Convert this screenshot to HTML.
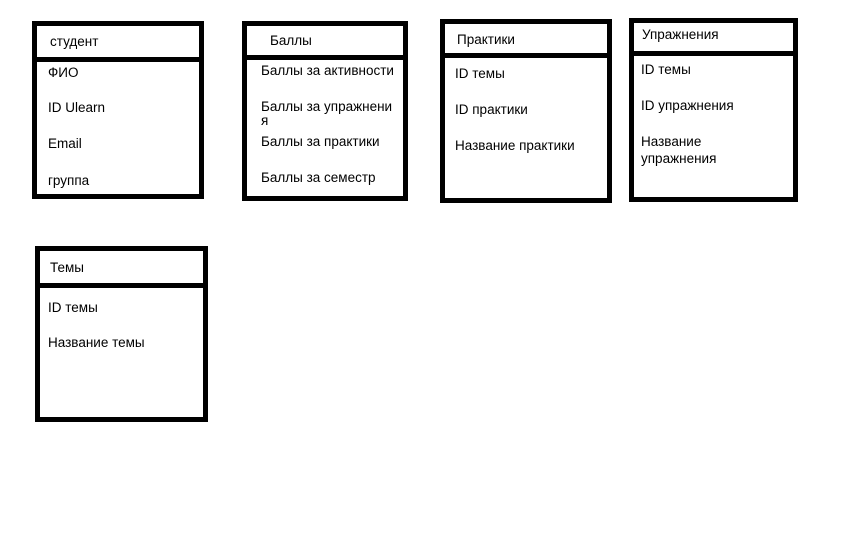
<!DOCTYPE html>
<html><head><meta charset="utf-8"><style>
html,body{margin:0;padding:0;background:#fff;width:864px;height:540px;overflow:hidden;position:relative}
.b{position:absolute;background:#000}
.i{position:absolute;background:#fff}
.t{position:absolute;font-family:"Liberation Sans","DejaVu Sans",sans-serif;font-size:13.5px;line-height:16px;color:#000;white-space:nowrap}
</style></head><body>
<div class="b" style="left:32px;top:21px;width:172px;height:178px"></div>
<div class="i" style="left:37px;top:26px;width:162px;height:31px"></div>
<div class="i" style="left:37px;top:62px;width:162px;height:132px"></div>
<div class="b" style="left:242px;top:21px;width:166px;height:180px"></div>
<div class="i" style="left:247px;top:26px;width:156px;height:29px"></div>
<div class="i" style="left:247px;top:60px;width:156px;height:136px"></div>
<div class="b" style="left:440px;top:19px;width:172px;height:184px"></div>
<div class="i" style="left:445px;top:24px;width:162px;height:29px"></div>
<div class="i" style="left:445px;top:58px;width:162px;height:140px"></div>
<div class="b" style="left:629px;top:18px;width:169px;height:184px"></div>
<div class="i" style="left:634px;top:23px;width:159px;height:28px"></div>
<div class="i" style="left:634px;top:56px;width:159px;height:141px"></div>
<div class="b" style="left:35px;top:246px;width:173px;height:176px"></div>
<div class="i" style="left:40px;top:251px;width:163px;height:32px"></div>
<div class="i" style="left:40px;top:288px;width:163px;height:129px"></div>

<div class="t" style="left:50px;top:34px">студент</div>
<div class="t" style="left:48px;top:65px">ФИО</div>
<div class="t" style="left:48px;top:100px">ID Ulearn</div>
<div class="t" style="left:48px;top:136px">Email</div>
<div class="t" style="left:48px;top:173px">группа</div>

<div class="t" style="left:270px;top:33px">Баллы</div>
<div class="t" style="left:261px;top:63px">Баллы за активности</div>
<div class="t" style="left:261px;top:99px">Баллы за упражнени</div>
<div class="t" style="left:261px;top:113px">я</div>
<div class="t" style="left:261px;top:134px">Баллы за практики</div>
<div class="t" style="left:261px;top:170px">Баллы за семестр</div>

<div class="t" style="left:457px;top:32px">Практики</div>
<div class="t" style="left:455px;top:66px">ID темы</div>
<div class="t" style="left:455px;top:102px">ID практики</div>
<div class="t" style="left:455px;top:138px">Название практики</div>

<div class="t" style="left:642px;top:27px">Упражнения</div>
<div class="t" style="left:641px;top:62px">ID темы</div>
<div class="t" style="left:641px;top:98px">ID упражнения</div>
<div class="t" style="left:641px;top:134px">Название</div>
<div class="t" style="left:641px;top:151px">упражнения</div>

<div class="t" style="left:50px;top:260px">Темы</div>
<div class="t" style="left:48px;top:300px">ID темы</div>
<div class="t" style="left:48px;top:335px">Название темы</div>
</body></html>
